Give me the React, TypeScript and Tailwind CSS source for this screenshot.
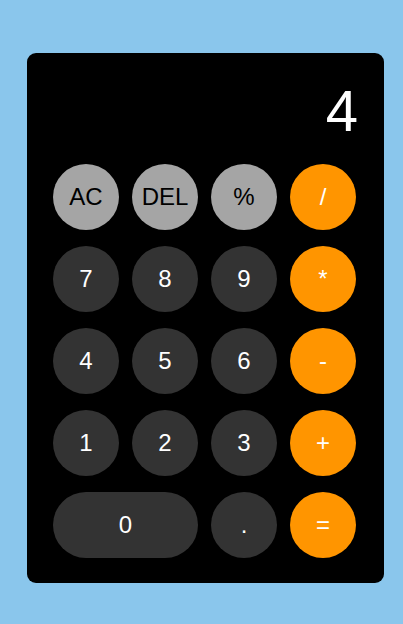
const keys: { label: string; kind: 'fn' | 'num' | 'op'; wide?: boolean }[] = [
  { label: 'AC', kind: 'fn' },
  { label: 'DEL', kind: 'fn' },
  { label: '%', kind: 'fn' },
  { label: '/', kind: 'op' },
  { label: '7', kind: 'num' },
  { label: '8', kind: 'num' },
  { label: '9', kind: 'num' },
  { label: '*', kind: 'op' },
  { label: '4', kind: 'num' },
  { label: '5', kind: 'num' },
  { label: '6', kind: 'num' },
  { label: '-', kind: 'op' },
  { label: '1', kind: 'num' },
  { label: '2', kind: 'num' },
  { label: '3', kind: 'num' },
  { label: '+', kind: 'op' },
  { label: '0', kind: 'num', wide: true },
  { label: '.', kind: 'num' },
  { label: '=', kind: 'op' },
]

const styles = {
  fn: 'bg-[#a5a5a5] text-black',
  num: 'bg-[#333333] text-white',
  op: 'bg-[#ff9500] text-white',
}

export default function App() {
  return (
    <div className="min-h-[624px] bg-[#8ac6ec] pt-[53px] font-['Liberation_Sans',Arial,sans-serif]">
      <div className="ml-[27px] w-[357px] rounded-[9px] bg-black pl-[26px] pr-[28px] pt-[29px] pb-[25px]">
        <div className="-mr-[2px] mb-[24px] h-[58px] text-right text-[58px] leading-[58px] text-white">4</div>
        <div className="grid grid-cols-[repeat(4,66px)] gap-x-[13px] gap-y-[16px]">
          {keys.map((k) => (
            <button
              key={k.label}
              className={`flex h-[66px] items-center justify-center rounded-full text-[24px] ${styles[k.kind]} ${k.wide ? 'col-span-2' : ''}`}
            >
              {k.label}
            </button>
          ))}
        </div>
      </div>
    </div>
  )
}
